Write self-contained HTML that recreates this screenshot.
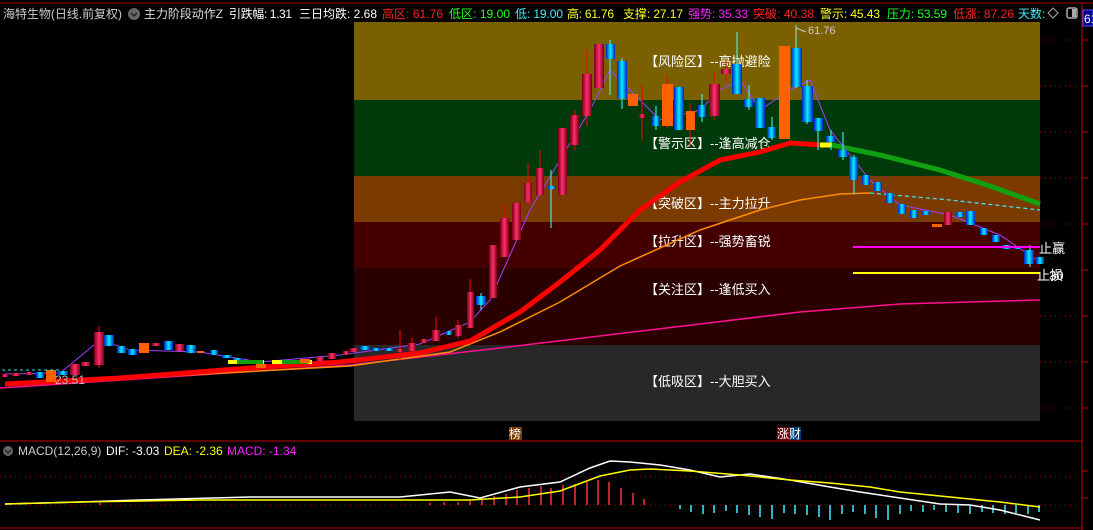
<!DOCTYPE html>
<html><head><meta charset="utf-8"><style>
body{margin:0;background:#000;width:1093px;height:530px;overflow:hidden;font-family:"Liberation Sans","Noto Sans CJK SC",sans-serif}
svg{position:absolute;left:0;top:0}
.t{font-family:"Liberation Sans","Noto Sans CJK SC",sans-serif}
</style></head><body>
<svg width="1093" height="530" viewBox="0 0 1093 530" xmlns="http://www.w3.org/2000/svg">
<defs>
<linearGradient id="r" x1="0" x2="1"><stop offset="0" stop-color="#7a0010"/><stop offset="0.5" stop-color="#ff3070"/><stop offset="1" stop-color="#7a0010"/></linearGradient>
<linearGradient id="c" x1="0" x2="1"><stop offset="0" stop-color="#0020c0"/><stop offset="0.5" stop-color="#00f0ff"/><stop offset="1" stop-color="#0020c0"/></linearGradient>
</defs>
<line x1="0" y1="3" x2="1093" y2="3" stroke="#a00000" stroke-width="1"/>
<line x1="1082" y1="3" x2="1082" y2="530" stroke="#c00000"/>
<line x1="0" y1="441" x2="1082" y2="441" stroke="#c00000"/>
<line x1="0" y1="528" x2="1082" y2="528" stroke="#c00000"/>
<rect x="1083" y="10" width="10" height="16" fill="#00008a" stroke="#5050ff"/>
<text x="1084" y="23" font-size="12" fill="#fff" class="t">61</text>
<g stroke="#c00000"><line x1="1082" y1="40" x2="1088" y2="40"/><line x1="1082" y1="86" x2="1088" y2="86"/><line x1="1082" y1="132" x2="1088" y2="132"/><line x1="1082" y1="178" x2="1088" y2="178"/><line x1="1082" y1="224" x2="1088" y2="224"/><line x1="1082" y1="270" x2="1088" y2="270"/><line x1="1082" y1="316" x2="1088" y2="316"/><line x1="1082" y1="362" x2="1088" y2="362"/><line x1="1082" y1="408" x2="1088" y2="408"/><line x1="1082" y1="471" x2="1088" y2="471"/><line x1="1082" y1="498" x2="1088" y2="498"/></g>
<g stroke="#a00000" stroke-dasharray="1,4"><line x1="1040" y1="40" x2="1080" y2="40"/><line x1="1040" y1="86" x2="1080" y2="86"/><line x1="1040" y1="132" x2="1080" y2="132"/><line x1="1040" y1="178" x2="1080" y2="178"/><line x1="1040" y1="224" x2="1080" y2="224"/><line x1="1040" y1="316" x2="1080" y2="316"/><line x1="1040" y1="362" x2="1080" y2="362"/><line x1="1040" y1="408" x2="1080" y2="408"/>
<line x1="0" y1="477" x2="1080" y2="477"/><line x1="0" y1="505" x2="1080" y2="505"/></g>
<rect x="354" y="22" width="686" height="78" fill="#7a6000"/>
<rect x="354" y="100" width="686" height="76" fill="#003a0a"/>
<rect x="354" y="176" width="686" height="46" fill="#7a3a00"/>
<rect x="354" y="222" width="686" height="46" fill="#440000"/>
<rect x="354" y="268" width="686" height="77" fill="#2a0000"/>
<rect x="354" y="345" width="686" height="76" fill="#282828"/>
<g fill="#fff" font-size="13" class="t">
<text x="645" y="66">【风险区】--高抛避险</text>
<text x="645" y="148">【警示区】--逢高减仓</text>
<text x="645" y="208">【突破区】--主力拉升</text>
<text x="645" y="246">【拉升区】--强势畜锐</text>
<text x="645" y="294">【关注区】--逢低买入</text>
<text x="645" y="386">【低吸区】--大胆买入</text>
</g>
<polyline fill="none" stroke="#ff1090" stroke-width="1.5" points="0,388 350,365 500,348 650,330 800,312 900,304 1040,300"/>
<polyline fill="none" stroke="#ff8c00" stroke-width="1.5" points="5,385 350,366 450,352 500,332 560,302 620,266 700,230 760,210 800,200 840,194 870,193"/>
<polyline fill="none" stroke="#40e0f0" stroke-width="1.3" stroke-dasharray="4,3" points="870,193 950,200 1040,210"/>
<polyline fill="none" stroke="#ff0000" stroke-width="5" points="5,384 120,378 250,368 340,362 420,353 470,341 520,312 560,282 600,250 640,210 680,182 720,160 760,152 790,143 822,145"/>
<polyline fill="none" stroke="#ffff00" stroke-width="5" points="820,145 832,145"/>
<polyline fill="none" stroke="#10a010" stroke-width="5" points="832,145 880,155 940,170 990,186 1040,204"/>
<polyline fill="none" stroke="#a040ff" stroke-width="1" points="5,374 60,373 100,340 130,350 200,352 260,362 340,355 420,344 470,322 490,300 510,255 530,210 560,160 590,110 610,70 630,90 660,120 700,110 720,90 740,80 760,110 790,90 810,80 830,130 870,180 900,205 950,215 1000,235 1040,262"/>
<g stroke="#ff0000" stroke-width="1"><line x1="400" y1="330" x2="400" y2="360"/></g>
<g>
<rect x="2" y="374" width="6" height="3" fill="url(#r)"/><rect x="12" y="373" width="8" height="3" fill="url(#r)"/><rect x="26" y="372" width="6" height="3" fill="url(#r)"/>
<rect x="36" y="372" width="8" height="6" fill="url(#c)"/><rect x="46" y="370" width="10" height="12" fill="#ff6000"/><rect x="58" y="371" width="10" height="4" fill="url(#c)"/>
<rect x="70" y="364" width="10" height="11" fill="url(#r)"/><rect x="81" y="362" width="9" height="4" fill="url(#r)"/>
<line x1="99" y1="326" x2="99" y2="368" stroke="#f00"/><rect x="94" y="332" width="10" height="33" fill="url(#r)"/>
<rect x="104" y="335" width="10" height="11" fill="url(#c)"/><rect x="117" y="346" width="9" height="7" fill="url(#c)"/><rect x="128" y="349" width="9" height="6" fill="url(#c)"/>
<rect x="139" y="343" width="10" height="10" fill="#ff6000"/><rect x="152" y="343" width="8" height="3" fill="url(#r)"/><rect x="164" y="341" width="9" height="9" fill="url(#c)"/>
<rect x="175" y="344" width="9" height="7" fill="url(#r)"/><rect x="186" y="345" width="10" height="8" fill="url(#c)"/><rect x="197" y="351" width="7" height="2" fill="#ff6000"/>
<rect x="210" y="350" width="8" height="5" fill="url(#c)"/><rect x="222" y="355" width="10" height="3" fill="url(#c)"/><rect x="233" y="358" width="9" height="3" fill="url(#c)"/>
<rect x="228" y="360" width="36" height="4" fill="#ffff00"/><rect x="237" y="360" width="26" height="4" fill="#10a010"/><rect x="272" y="360" width="40" height="4" fill="#ffff00"/><rect x="282" y="360" width="26" height="4" fill="#10a010"/>
<rect x="256" y="364" width="10" height="4" fill="#ff6000"/><rect x="300" y="359" width="10" height="4" fill="#ff6000"/><rect x="316" y="357" width="8" height="4" fill="url(#r)"/>
<rect x="328" y="353" width="8" height="6" fill="url(#r)"/>
<rect x="343" y="351" width="6" height="4" fill="url(#r)"/><rect x="350" y="348" width="8" height="4" fill="url(#r)"/><rect x="360" y="346" width="10" height="4" fill="url(#c)"/>
<rect x="372" y="348" width="8" height="3" fill="url(#c)"/><rect x="385" y="348" width="8" height="3" fill="url(#c)"/><rect x="397" y="349" width="6" height="3" fill="url(#r)"/>
<line x1="412" y1="338" x2="412" y2="352" stroke="#f00"/><rect x="408" y="343" width="8" height="8" fill="url(#r)"/>
<rect x="421" y="339" width="6" height="4" fill="url(#r)"/>
<line x1="436" y1="317" x2="436" y2="341" stroke="#f00"/><rect x="432" y="330" width="8" height="11" fill="url(#r)"/>
<rect x="446" y="331" width="6" height="4" fill="url(#c)"/>
<line x1="458" y1="320" x2="458" y2="338" stroke="#f00"/><rect x="455" y="325" width="7" height="11" fill="url(#r)"/>
<line x1="470" y1="279" x2="470" y2="328" stroke="#f00"/><rect x="467" y="292" width="7" height="36" fill="url(#r)"/>
<line x1="481" y1="293" x2="481" y2="310" stroke="#4ff"/><rect x="476" y="296" width="10" height="9" fill="url(#c)"/>
<rect x="489" y="245" width="8" height="53" fill="url(#r)"/>
<line x1="505" y1="204" x2="505" y2="257" stroke="#f00"/><rect x="500" y="218" width="9" height="39" fill="url(#r)"/>
<rect x="512" y="203" width="9" height="37" fill="url(#r)"/>
<line x1="528" y1="163" x2="528" y2="205" stroke="#f00"/><rect x="524" y="183" width="8" height="19" fill="url(#r)"/>
<line x1="540" y1="150" x2="540" y2="196" stroke="#f00"/><rect x="536" y="168" width="8" height="27" fill="url(#r)"/>
<line x1="551" y1="170" x2="551" y2="228" stroke="#4ff"/><rect x="548" y="186" width="8" height="3" fill="url(#c)"/>
<rect x="558" y="128" width="9" height="67" fill="url(#r)"/>
<line x1="575" y1="110" x2="575" y2="150" stroke="#f00"/><rect x="570" y="115" width="9" height="30" fill="url(#r)"/>
<line x1="587" y1="50" x2="587" y2="126" stroke="#f00"/><rect x="582" y="74" width="10" height="42" fill="url(#r)"/>
<rect x="594" y="44" width="10" height="44" fill="url(#r)"/>
<line x1="610" y1="40" x2="610" y2="95" stroke="#4ff"/><rect x="606" y="44" width="9" height="15" fill="url(#c)"/>
<line x1="622" y1="58" x2="622" y2="109" stroke="#4ff"/><rect x="617" y="61" width="10" height="38" fill="url(#c)"/>
<rect x="628" y="94" width="10" height="12" fill="#ff6000"/>
<line x1="642" y1="84" x2="642" y2="140" stroke="#f00"/><rect x="639" y="114" width="6" height="4" fill="url(#r)"/>
<line x1="656" y1="106" x2="656" y2="130" stroke="#4ff"/><rect x="652" y="116" width="8" height="10" fill="url(#c)"/>
<line x1="667" y1="75" x2="667" y2="128" stroke="#f00"/><rect x="662" y="84" width="11" height="42" fill="#ff6000"/>
<rect x="674" y="87" width="10" height="43" fill="url(#c)"/>
<line x1="690" y1="103" x2="690" y2="147" stroke="#f00"/><rect x="686" y="111" width="9" height="19" fill="#ff6000"/>
<line x1="702" y1="94" x2="702" y2="122" stroke="#4ff"/><rect x="698" y="105" width="8" height="12" fill="url(#c)"/>
<line x1="714" y1="72" x2="714" y2="120" stroke="#f00"/><rect x="709" y="84" width="11" height="32" fill="url(#r)"/>
<line x1="726" y1="60" x2="726" y2="82" stroke="#f00"/><rect x="721" y="69" width="10" height="5" fill="url(#r)"/>
<line x1="737" y1="32" x2="737" y2="94" stroke="#4ff"/><rect x="732" y="64" width="10" height="30" fill="url(#c)"/>
<line x1="749" y1="85" x2="749" y2="110" stroke="#4ff"/><rect x="744" y="99" width="9" height="8" fill="url(#c)"/>
<rect x="755" y="98" width="10" height="30" fill="url(#c)"/>
<line x1="772" y1="117" x2="772" y2="140" stroke="#4ff"/><rect x="767" y="127" width="9" height="11" fill="url(#c)"/>
<rect x="779" y="46" width="11" height="93" fill="#ff6000"/>
<line x1="796" y1="25" x2="796" y2="88" stroke="#4ff"/><rect x="791" y="48" width="11" height="39" fill="url(#c)"/>
<line x1="807" y1="80" x2="807" y2="124" stroke="#4ff"/><rect x="802" y="86" width="11" height="36" fill="url(#c)"/>
<line x1="818" y1="118" x2="818" y2="150" stroke="#4ff"/><rect x="814" y="118" width="9" height="13" fill="url(#c)"/>
<line x1="831" y1="130" x2="831" y2="150" stroke="#4ff"/><rect x="826" y="136" width="9" height="6" fill="url(#c)"/>
<line x1="843" y1="132" x2="843" y2="160" stroke="#4ff"/><rect x="838" y="150" width="10" height="7" fill="url(#c)"/>
<line x1="854" y1="155" x2="854" y2="194" stroke="#4ff"/><rect x="849" y="157" width="9" height="23" fill="url(#c)"/>
<rect x="862" y="175" width="8" height="10" fill="url(#c)"/><rect x="874" y="182" width="8" height="9" fill="url(#c)"/>
<rect x="886" y="193" width="8" height="10" fill="url(#c)"/><rect x="898" y="204" width="8" height="10" fill="url(#c)"/>
<rect x="910" y="210" width="8" height="8" fill="url(#c)"/><rect x="922" y="211" width="8" height="4" fill="url(#c)"/>
<rect x="932" y="224" width="10" height="3" fill="#ff6000"/><rect x="944" y="212" width="8" height="13" fill="url(#r)"/>
<rect x="956" y="212" width="8" height="5" fill="url(#c)"/><rect x="966" y="211" width="9" height="14" fill="url(#c)"/>
<rect x="980" y="228" width="8" height="7" fill="url(#c)"/><rect x="992" y="235" width="8" height="7" fill="url(#c)"/>
<rect x="1002" y="245" width="9" height="4" fill="url(#c)"/><rect x="1014" y="246" width="8" height="3" fill="url(#c)"/>
<line x1="1030" y1="245" x2="1030" y2="267" stroke="#4ff"/><rect x="1024" y="250" width="10" height="14" fill="url(#c)"/>
<rect x="1036" y="257" width="8" height="7" fill="url(#c)"/>
</g>
<line x1="853" y1="247" x2="1040" y2="247" stroke="#ff00ff" stroke-width="2"/>
<line x1="853" y1="273" x2="1040" y2="273" stroke="#ffff00" stroke-width="2"/>
<line x1="2" y1="370" x2="60" y2="370" stroke="#40e0f0" stroke-dasharray="3,3"/>
<g fill="#fff" font-size="13" class="t"><text x="1039" y="253">止赢</text><text x="1037" y="280">止损</text><text x="1049" y="280">30</text></g>
<text x="55" y="384" fill="#bbb" font-size="12" class="t">23.51</text>
<text x="808" y="34" fill="#ccc" font-size="11" class="t">61.76</text>
<path d="M796,38 V27 M796,28 L806,32" stroke="#ccc" fill="none"/>
<rect x="509" y="427" width="13" height="13" fill="#7a3a00"/><text x="509" y="438" fill="#fff" font-size="12" class="t">榜</text>
<rect x="777" y="427" width="12" height="13" fill="#700000"/><rect x="789" y="427" width="12" height="13" fill="#003a70"/><text x="777" y="438" fill="#fff" font-size="12" class="t">涨财</text>
<g font-size="12" class="t">
<text x="3" y="18" fill="#ccc" textLength="119" lengthAdjust="spacing">海特生物(日线.前复权)</text>
<circle cx="134" cy="14" r="6" fill="#666"/><path d="M131,13 l3,3 l3,-3" stroke="#222" fill="none" stroke-width="1.5"/>
<text x="144" y="18" fill="#ddd" textLength="79" lengthAdjust="spacing">主力阶段动作Z</text>
<text x="229" y="18" fill="#fff" textLength="63" lengthAdjust="spacing">引跌幅: 1.31</text>
<text x="299" y="18" fill="#fff" textLength="78" lengthAdjust="spacing">三日均跌: 2.68</text>
<text x="382" y="18" fill="#ff2020" textLength="61" lengthAdjust="spacing">高区: 61.76</text>
<text x="449" y="18" fill="#20ff20" textLength="61" lengthAdjust="spacing">低区: 19.00</text>
<text x="515" y="18" fill="#40f0ff" textLength="48" lengthAdjust="spacing">低: 19.00</text>
<text x="567" y="18" fill="#ffff20" textLength="47" lengthAdjust="spacing">高: 61.76</text>
<text x="623" y="18" fill="#ffff20" textLength="60" lengthAdjust="spacing">支撑: 27.17</text>
<text x="688" y="18" fill="#ff20ff" textLength="60" lengthAdjust="spacing">强势: 35.33</text>
<text x="753" y="18" fill="#ff2020" textLength="61" lengthAdjust="spacing">突破: 40.38</text>
<text x="820" y="18" fill="#ffff20" textLength="60" lengthAdjust="spacing">警示: 45.43</text>
<text x="887" y="18" fill="#20ff20" textLength="60" lengthAdjust="spacing">压力: 53.59</text>
<text x="953" y="18" fill="#ff2020" textLength="61" lengthAdjust="spacing">低涨: 87.26</text>
<text x="1018" y="18" fill="#40f0ff">天数:</text>
</g>
<path d="M1053,8 l5,5 l-5,5 l-5,-5z" stroke="#aaa" fill="none"/>
<rect x="1067" y="8" width="10" height="10" rx="2" stroke="#aaa" fill="none" stroke-width="1.5"/><rect x="1072" y="9" width="4" height="8" fill="#aaa"/>
<circle cx="8" cy="451" r="5" fill="#666"/><path d="M5,450 l3,3 l3,-3" stroke="#222" fill="none" stroke-width="1.3"/>
<g font-size="12" class="t"><text x="18" y="455" fill="#ccc">MACD(12,26,9)</text><text x="106" y="455" fill="#fff">DIF: -3.03</text><text x="164" y="455" fill="#ffff00">DEA: -2.36</text><text x="227" y="455" fill="#ff20ff">MACD: -1.34</text></g>
<g stroke="#ff3030" stroke-width="1.5">
<line x1="482" y1="505" x2="482" y2="499"/><line x1="494" y1="505" x2="494" y2="496"/><line x1="506" y1="505" x2="506" y2="494"/><line x1="517" y1="505" x2="517" y2="490"/><line x1="529" y1="505" x2="529" y2="488"/><line x1="541" y1="505" x2="541" y2="486"/><line x1="551" y1="505" x2="551" y2="488"/><line x1="563" y1="505" x2="563" y2="485"/><line x1="575" y1="505" x2="575" y2="484"/><line x1="587" y1="505" x2="587" y2="482"/><line x1="598" y1="505" x2="598" y2="480"/><line x1="609" y1="505" x2="609" y2="482"/><line x1="621" y1="505" x2="621" y2="488"/><line x1="633" y1="505" x2="633" y2="493"/><line x1="644" y1="505" x2="644" y2="499"/>
<line x1="100" y1="505" x2="100" y2="503"/><line x1="430" y1="505" x2="430" y2="503"/><line x1="444" y1="505" x2="444" y2="502"/><line x1="458" y1="505" x2="458" y2="502"/><line x1="470" y1="505" x2="470" y2="501"/></g>
<g stroke="#40f0ff" stroke-width="1.5">
<line x1="680" y1="505" x2="680" y2="509"/><line x1="691" y1="505" x2="691" y2="512"/><line x1="703" y1="505" x2="703" y2="514"/><line x1="714" y1="505" x2="714" y2="513"/><line x1="726" y1="505" x2="726" y2="511"/><line x1="737" y1="505" x2="737" y2="513"/><line x1="749" y1="505" x2="749" y2="515"/><line x1="760" y1="505" x2="760" y2="517"/><line x1="772" y1="505" x2="772" y2="519"/><line x1="784" y1="505" x2="784" y2="513"/><line x1="795" y1="505" x2="795" y2="514"/><line x1="807" y1="505" x2="807" y2="515"/><line x1="819" y1="505" x2="819" y2="517"/><line x1="830" y1="505" x2="830" y2="520"/><line x1="842" y1="505" x2="842" y2="514"/><line x1="853" y1="505" x2="853" y2="512"/><line x1="865" y1="505" x2="865" y2="514"/><line x1="876" y1="505" x2="876" y2="518"/><line x1="888" y1="505" x2="888" y2="520"/><line x1="900" y1="505" x2="900" y2="514"/><line x1="911" y1="505" x2="911" y2="511"/><line x1="923" y1="505" x2="923" y2="512"/><line x1="934" y1="505" x2="934" y2="510"/><line x1="946" y1="505" x2="946" y2="512"/><line x1="958" y1="505" x2="958" y2="513"/><line x1="970" y1="505" x2="970" y2="514"/><line x1="982" y1="505" x2="982" y2="512"/><line x1="993" y1="505" x2="993" y2="513"/><line x1="1005" y1="505" x2="1005" y2="514"/><line x1="1016" y1="505" x2="1016" y2="513"/><line x1="1028" y1="505" x2="1028" y2="514"/><line x1="1039" y1="505" x2="1039" y2="512"/></g>
<polyline fill="none" stroke="#fff" stroke-width="1.5" points="5,504 80,502 140,500 250,497 400,497 450,492 480,498 520,487 560,482 590,468 610,461 630,462 660,465 690,470 720,477 750,474 790,480 830,487 860,492 900,498 940,504 970,505 1000,510 1040,520"/>
<polyline fill="none" stroke="#ffff00" stroke-width="1.5" points="5,504 80,502 200,500 300,500 400,500 470,500 520,497 560,491 600,476 630,470 650,469 690,471 740,475 790,480 830,483 870,487 900,492 950,497 1000,502 1040,507"/>
</svg>
</body></html>
